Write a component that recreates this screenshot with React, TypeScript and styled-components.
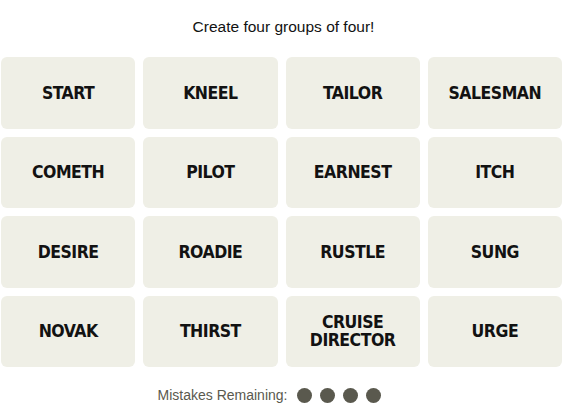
import React from "react";
import styled, {createGlobalStyle} from "styled-components";

const GlobalStyle = createGlobalStyle`
  html, body {
    margin: 0;
    padding: 0;
    background: #ffffff;
  }
  body {
    font-family: "Liberation Sans", Arial, sans-serif;
    color: #121212;
  }
`;

const WORDS: string[] = [
    "START", "KNEEL", "TAILOR", "SALESMAN",
    "COMETH", "PILOT", "EARNEST", "ITCH",
    "DESIRE", "ROADIE", "RUSTLE", "SUNG",
    "NOVAK", "THIRST", "CRUISE DIRECTOR", "URGE",
];

const Page = styled.div`
  width: 567px;
  display: flex;
  flex-direction: column;
  align-items: center;
`;

const Title = styled.p`
  margin: 17px 0 0;
  height: 19px;
  font-size: 15.5px;
  line-height: 19px;
  color: #121212;
`;

const Board = styled.div`
  margin-top: 21px;
  width: 561px;
  display: grid;
  grid-template-columns: repeat(4, 1fr);
  grid-auto-rows: 71.5px;
  gap: 8px;
  align-self: flex-start;
  margin-left: 1px;
`;

const Tile = styled.button`
  border: none;
  border-radius: 6px;
  background: #efefe6;
  color: #121212;
  display: flex;
  align-items: center;
  justify-content: center;
  padding: 0 10px;
  font-family: "DejaVu Sans Condensed", "Liberation Sans", sans-serif;
  font-weight: 700;
  font-size: 17.5px;
  line-height: 18px;
  letter-spacing: -0.5px;
  text-align: center;
  text-transform: uppercase;
`;

const Footer = styled.div`
  margin-top: 20px;
  padding-right: 28px;
  display: flex;
  align-items: center;
  gap: 10px;
`;

const FooterLabel = styled.span`
  font-size: 14px;
  color: #5a594e;
`;

const Dots = styled.div`
  display: flex;
  gap: 8px;
`;

const Dot = styled.span`
  width: 15px;
  height: 15px;
  border-radius: 50%;
  background: #5a594e;
`;

export default function App() {
    return (
        <Page>
            <GlobalStyle/>
            <Title>Create four groups of four!</Title>
            <Board>
                {WORDS.map((w) => (
                    <Tile key={w}>{w}</Tile>
                ))}
            </Board>
            <Footer>
                <FooterLabel>Mistakes Remaining:</FooterLabel>
                <Dots>
                    {[0, 1, 2, 3].map((i) => <Dot key={i}/>)}
                </Dots>
            </Footer>
        </Page>
    );
}
